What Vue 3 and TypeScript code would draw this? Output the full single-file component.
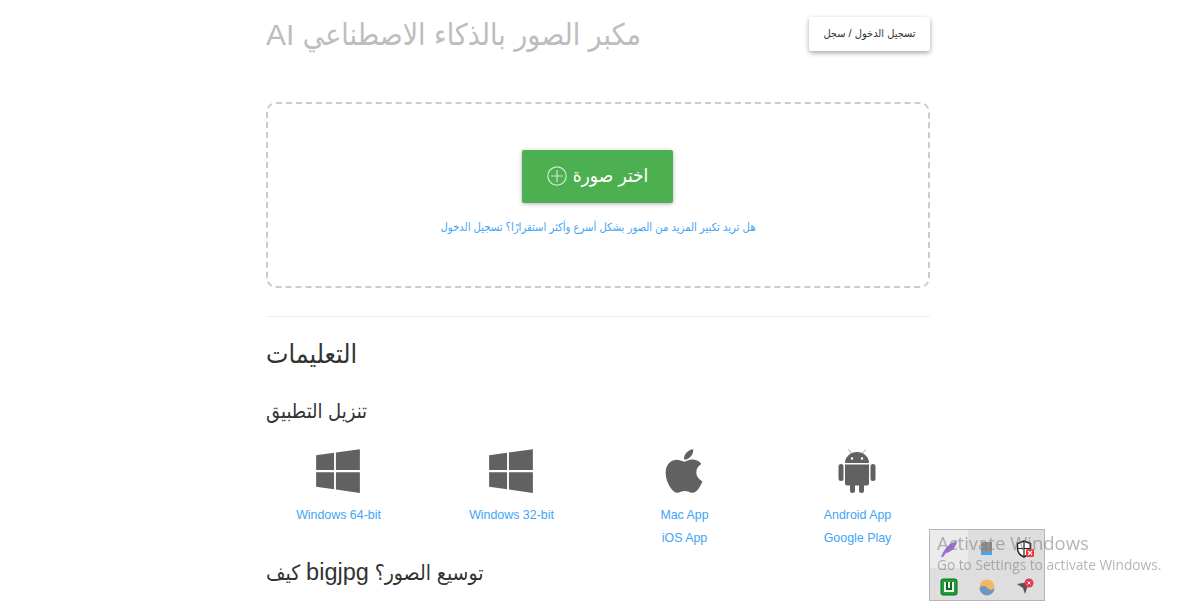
<script setup lang="ts">
interface AppLink {
  icon: 'windows' | 'apple' | 'android'
  links: string[]
}

const apps: AppLink[] = [
  { icon: 'windows', links: ['Windows 64-bit'] },
  { icon: 'windows', links: ['Windows 32-bit'] },
  { icon: 'apple', links: ['Mac App', 'iOS App'] },
  { icon: 'android', links: ['Android App', 'Google Play'] }
]
</script>

<template>
  <div class="page">
    <header class="top">
      <h1 class="title">AI مكبر الصور بالذكاء الاصطناعي</h1>
      <button class="login">تسجيل الدخول / سجل</button>
    </header>

    <section class="drop">
      <button class="pick">
        <svg class="plus" viewBox="0 0 20 20" width="20" height="20">
          <circle cx="10" cy="10" r="9.2" fill="none" stroke="#cfe8d0" stroke-width="1.2" />
          <path d="M10 4v12M4 10h12" stroke="#cfe8d0" stroke-width="1.2" />
        </svg>
        <span>اختر صورة</span>
      </button>
      <a class="hint">هل تريد تكبير المزيد من الصور بشكل أسرع وأكثر استقرارًا؟ تسجيل الدخول</a>
    </section>

    <hr class="rule" />

    <h2 class="h-main">التعليمات</h2>
    <h3 class="h-sub">تنزيل التطبيق</h3>

    <div class="apps">
      <div v-for="(app, i) in apps" :key="i" class="app">
        <div class="icon">
          <svg v-if="app.icon === 'windows'" viewBox="0 0 448 512" width="44" height="50">
            <path d="M0 93.7l183.6-25.3v177.4H0V93.7zm0 324.6l183.6 25.3V268.4H0v149.9zm202.8 27.8L448 480V268.4H202.8v177.7zm0-380.6v180.1H448V32L202.8 65.5z" />
          </svg>
          <svg v-else-if="app.icon === 'apple'" viewBox="0 0 384 512" width="38" height="50">
            <path d="M318.7 268.7c-.2-36.7 16.4-64.4 50-84.8-18.8-26.9-47.2-41.7-84.7-44.6-35.5-2.8-74.3 20.7-88.5 20.7-15 0-49.4-19.7-76.4-19.7C63.3 141.2 4 184.8 4 273.5q0 39.3 14.4 81.2c12.8 36.7 59 126.7 107.2 125.2 25.2-.6 43-17.9 75.8-17.9 31.8 0 48.3 17.9 76.4 17.9 48.6-.7 90.4-82.5 102.6-119.3-65.2-30.7-61.7-90-61.7-91.9zm-56.6-164.2c27.3-32.4 24.8-61.9 24-72.5-24.1 1.4-52 16.4-67.9 34.9-17.5 19.8-27.8 44.3-25.6 71.9 26.1 2 49.9-11.4 69.5-34.3z" />
          </svg>
          <svg v-else viewBox="0 0 38 44" width="38" height="44">
            <path d="M7 14a12 11 0 0 1 24 0z" />
            <path d="M13 4l-2.500-3.500M25 4l2.500-3.500" stroke="#9e9e9e" stroke-width="1" />
            <circle cx="14" cy="9.500" r="1.200" fill="#fff" />
            <circle cx="24" cy="9.500" r="1.200" fill="#fff" />
            <path d="M7 15.500h24v19a2 2 0 0 1-2 2H9a2 2 0 0 1-2-2z" />
            <rect x="0.500" y="15" width="5" height="17" rx="2.500" />
            <rect x="32.500" y="15" width="5" height="17" rx="2.500" />
            <rect x="12" y="35" width="5" height="9" rx="2.500" />
            <rect x="21" y="35" width="5" height="9" rx="2.500" />
          </svg>
        </div>
        <a v-for="link in app.links" :key="link" class="app-link">{{ link }}</a>
      </div>
    </div>

    <h3 class="h-sub h-how">كيف <span class="brand">bigjpg</span> توسيع الصور؟</h3>

    <aside class="tray">
      <span class="cell cell-hover">
        <svg viewBox="0 0 20 20" width="20" height="20">
          <path d="M2 18C5 10 10 4 18 2c-1 6-5 11-11 12l-3 4z" fill="#9b6fd4" />
        </svg>
      </span>
      <span class="cell">
        <svg viewBox="0 0 20 20" width="20" height="20">
          <rect x="4" y="3" width="11" height="10" fill="#8f8f8f" />
          <rect x="4" y="13" width="11" height="3" fill="#42a5f5" />
        </svg>
      </span>
      <span class="cell">
        <svg viewBox="0 0 20 20" width="20" height="20">
          <path d="M9 2l6.500 2.500v5c0 4-3 7-6.500 8.500-3.500-1.500-6.500-4.500-6.500-8.500v-5z" fill="#fff" stroke="#222" stroke-width="1.500" />
          <path d="M9 2v16M2.500 9.500h13" stroke="#222" stroke-width="1.200" />
          <rect x="11" y="10" width="8" height="8" rx="1.500" fill="#e53935" />
          <path d="M13 12l4 4M17 12l-4 4" stroke="#fff" stroke-width="1.200" />
        </svg>
      </span>
      <span class="cell">
        <svg viewBox="0 0 20 20" width="20" height="20">
          <rect x="2" y="2" width="16" height="16" rx="2" fill="#1e9e3a" stroke="#0f6b22" />
          <rect x="5" y="5" width="10" height="10" fill="#eaf5e6" />
          <path d="M7 5v8h6V5h-2v6H9V5z" fill="#0f6b22" />
        </svg>
      </span>
      <span class="cell">
        <svg viewBox="0 0 20 20" width="20" height="20">
          <circle cx="10" cy="10" r="7.500" fill="#f0b860" />
          <path d="M2.500 11c3-3 5-3 8 0s5 2 7 0a7.500 7.500 0 0 1-15 0z" fill="#6f95c4" />
        </svg>
      </span>
      <span class="cell">
        <svg viewBox="0 0 20 20" width="20" height="20">
          <path d="M2 7l12-2-4 12-2-6z" fill="#555" />
          <circle cx="14" cy="6" r="4.500" fill="#e53950" />
          <path d="M12.500 4.500l3 3M15.500 4.500l-3 3" stroke="#fff" stroke-width="1" />
        </svg>
      </span>
    </aside>

    <div class="watermark">
      <div class="wm-title">Activate Windows</div>
      <div class="wm-sub">Go to Settings to activate Windows.</div>
    </div>
  </div>
</template>

<style>
html,
body {
  margin: 0;
  height: 601px;
  overflow: hidden;
  background: #fff;
}
</style>

<style scoped>
.page {
  width: 664px;
  margin-left: 266px;
  font-family: "Liberation Sans", "DejaVu Sans", Arial, sans-serif;
  font-stretch: condensed;
  color: #333;
}

.top {
  display: flex;
  justify-content: space-between;
  align-items: flex-start;
  height: 102px;
  padding-top: 17px;
  box-sizing: border-box;
}

.title {
  margin: 0;
  font-size: 30px;
  line-height: 36px;
  font-weight: 400;
  color: #bdbdbd;
}

.login {
  width: 121px;
  height: 34px;
  padding: 0 0 2px;
  border: none;
  border-radius: 2px;
  background: #fff;
  color: #333;
  font-family: inherit;
  font-stretch: inherit;
  font-size: 11px;
  box-shadow: 0 2px 5px rgba(0, 0, 0, 0.35);
}

.drop {
  display: flex;
  flex-direction: column;
  align-items: center;
  height: 186px;
  box-sizing: border-box;
  padding-top: 46px;
  border: 2px dashed #ccc;
  border-radius: 10px;
}

.pick {
  display: flex;
  align-items: center;
  justify-content: center;
  gap: 6px;
  width: 151px;
  height: 53px;
  margin-right: 1px;
  padding: 0 0 2px;
  border: none;
  border-radius: 2px;
  background: #4caf50;
  color: #fff;
  font-family: inherit;
  font-stretch: inherit;
  font-size: 19px;
  box-shadow: 0 1px 4px rgba(0, 0, 0, 0.3);
}

.hint {
  margin-top: 16px;
  font-size: 11.2px;
  line-height: 16px;
  color: #42a5f5;
}

.rule {
  margin: 28px 0 0;
  border: none;
  border-top: 1px solid #eee;
}

.h-main {
  margin: 19px 0 0;
  font-size: 26.500px;
  line-height: 36px;
  font-weight: 400;
}

.h-sub {
  margin: 24px 0 0;
  font-size: 20px;
  line-height: 30px;
  font-weight: 400;
}

.apps {
  display: grid;
  grid-template-columns: repeat(4, 173px);
  margin: 18px -14px 0;
}

.app {
  display: flex;
  flex-direction: column;
  align-items: center;
}

.icon {
  display: flex;
  align-items: center;
  justify-content: center;
  width: 100%;
  height: 54px;
  margin-bottom: 6px;
  margin-left: -2px;
}

.icon svg {
  fill: #616161;
}

.app-link {
  font-size: 12.400px;
  line-height: 23px;
  color: #42a5f5;
}

.h-how {
  margin-top: 7px;
  font-size: 21px;
}

.brand {
  font-size: 23.500px;
}

.tray {
  position: fixed;
  left: 929px;
  top: 529px;
  display: grid;
  grid-template-columns: repeat(3, 38px);
  grid-auto-rows: 38px;
  width: 116px;
  height: 72px;
  box-sizing: border-box;
  border: 1px solid #b5b5b5;
  background: #dedede;
}

.cell {
  display: flex;
  align-items: center;
  justify-content: center;
}

.cell-hover {
  background: #ebebeb;
}

.watermark {
  position: fixed;
  left: 937px;
  top: 529px;
  font-family: "Open Sans", sans-serif;
  font-stretch: normal;
  color: rgba(120, 120, 120, 0.55);
  white-space: nowrap;
  pointer-events: none;
}

.wm-title {
  font-size: 18.500px;
  line-height: 27px;
}

.wm-sub {
  margin-top: -1px;
  font-size: 13.700px;
  line-height: 20px;
}
</style>
